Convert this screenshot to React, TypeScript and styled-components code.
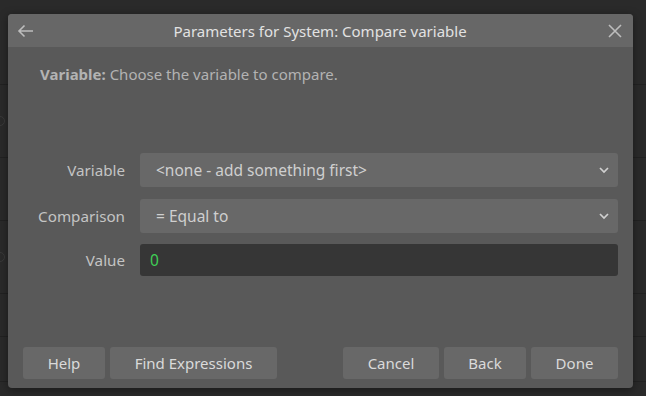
import React from 'react'
import styled, { createGlobalStyle } from 'styled-components'

const GlobalStyle = createGlobalStyle`
  html, body {
    margin: 0;
    padding: 0;
    background: #2a2a2a;
    font-family: "Noto Sans", "Open Sans", sans-serif;
  }
`

const Screen = styled.div`
  position: relative;
  width: 646px;
  height: 396px;
  overflow: hidden;
  background: #2a2a2a;
`

// rows of the app behind the modal, only their edges peek out
const Backdrop = styled.div`
  display: flex;
  flex-direction: column;
`

const BackRow = styled.div<{ $h: number }>`
  height: ${(p) => p.$h}px;
  border-bottom: 1px solid #222222;
  box-sizing: border-box;
  display: flex;
  align-items: center;
`

const PeekGlyph = styled.span`
  margin-left: -5px;
  width: 8px;
  height: 8px;
  border: 1.5px solid #3a3a3a;
  border-radius: 50%;
`

const Dialog = styled.div`
  position: absolute;
  left: 8px;
  top: 14px;
  width: 625px;
  height: 374px;
  background: #595959;
  border-radius: 4px;
  overflow: hidden;
  display: flex;
  flex-direction: column;
  box-shadow: 0 2px 10px rgba(0, 0, 0, 0.4);
`

const TitleBar = styled.div`
  height: 33px;
  flex-shrink: 0;
  background: #676767;
  display: flex;
  align-items: center;
  justify-content: space-between;
  padding: 0 9px 0 8px;
`

const Title = styled.div`
  flex: 1;
  text-align: center;
  color: #e2e2e2;
  font-size: 15px;
`

const IconBtn = styled.div`
  width: 18px;
  height: 18px;
  display: grid;
  place-items: center;
  color: #bdbdbd;
`

const Body = styled.div`
  flex: 1;
  display: flex;
  flex-direction: column;
  padding: 0 15px 9px 15px;
`

const Description = styled.div`
  padding: 17px 0 0 17px;
  color: #b3b3b3;
  font-size: 15px;
  height: 41px;
  b {
    font-weight: 700;
  }
`

const Form = styled.div`
  margin-top: 48px;
  display: grid;
  grid-template-columns: 102px 1fr;
  column-gap: 15px;
  row-gap: 11.5px;
  align-items: center;
`

const Label = styled.div`
  text-align: right;
  color: #c4c4c4;
  font-size: 15.2px;
`

const Select = styled.div`
  height: 34px;
  background: #686868;
  border-radius: 3px;
  display: flex;
  align-items: center;
  justify-content: space-between;
  padding: 0 8px 0 16px;
  color: #cfcfcf;
  font-size: 15.5px;
`

const Input = styled.div`
  height: 32px;
  background: #363636;
  border-radius: 3px;
  display: flex;
  align-items: center;
  padding: 0 10px;
  color: #3fcf55;
  font-size: 15.5px;
`

const Footer = styled.div`
  margin-top: auto;
  display: flex;
  align-items: center;
  gap: 5px;
`

const Spacer = styled.div`
  flex: 1;
`

const Button = styled.div<{ $w: number }>`
  width: ${(p) => p.$w}px;
  height: 32px;
  background: #686868;
  border-radius: 3px;
  display: grid;
  place-items: center;
  color: #dadada;
  font-size: 15px;
`

const Chevron = () => (
  <svg width="12" height="12" viewBox="0 0 12 12">
    <path d="M2 4 L6 8 L10 4" fill="none" stroke="#d0d0d0" strokeWidth="1.7" />
  </svg>
)

export default function App() {
  return (
    <Screen>
      <GlobalStyle />
      <Backdrop>
        <BackRow $h={85} />
        <BackRow $h={73}>
          <PeekGlyph />
        </BackRow>
        <BackRow $h={63} />
        <BackRow $h={73}>
          <PeekGlyph />
        </BackRow>
        <BackRow $h={43} />
        <BackRow $h={45} />
      </Backdrop>
      <Dialog>
        <TitleBar>
          <IconBtn>
            <svg width="17" height="14" viewBox="0 0 17 14">
              <path d="M16 7 H2 M7.5 1.5 L2 7 L7.5 12.5" fill="none" stroke="#bdbdbd" strokeWidth="1.6" />
            </svg>
          </IconBtn>
          <Title>Parameters for System: Compare variable</Title>
          <IconBtn>
            <svg width="14" height="14" viewBox="0 0 14 14">
              <path d="M1 1 L13 13 M13 1 L1 13" fill="none" stroke="#bdbdbd" strokeWidth="1.6" />
            </svg>
          </IconBtn>
        </TitleBar>
        <Body>
          <Description>
            <b>Variable:</b> Choose the variable to compare.
          </Description>
          <Form>
            <Label>Variable</Label>
            <Select>
              <span>&lt;none - add something first&gt;</span>
              <Chevron />
            </Select>
            <Label>Comparison</Label>
            <Select>
              <span>= Equal to</span>
              <Chevron />
            </Select>
            <Label>Value</Label>
            <Input>0</Input>
          </Form>
          <Footer>
            <Button $w={82}>Help</Button>
            <Button $w={167}>Find Expressions</Button>
            <Spacer />
            <Button $w={96}>Cancel</Button>
            <Button $w={82}>Back</Button>
            <Button $w={87}>Done</Button>
          </Footer>
        </Body>
      </Dialog>
    </Screen>
  )
}
